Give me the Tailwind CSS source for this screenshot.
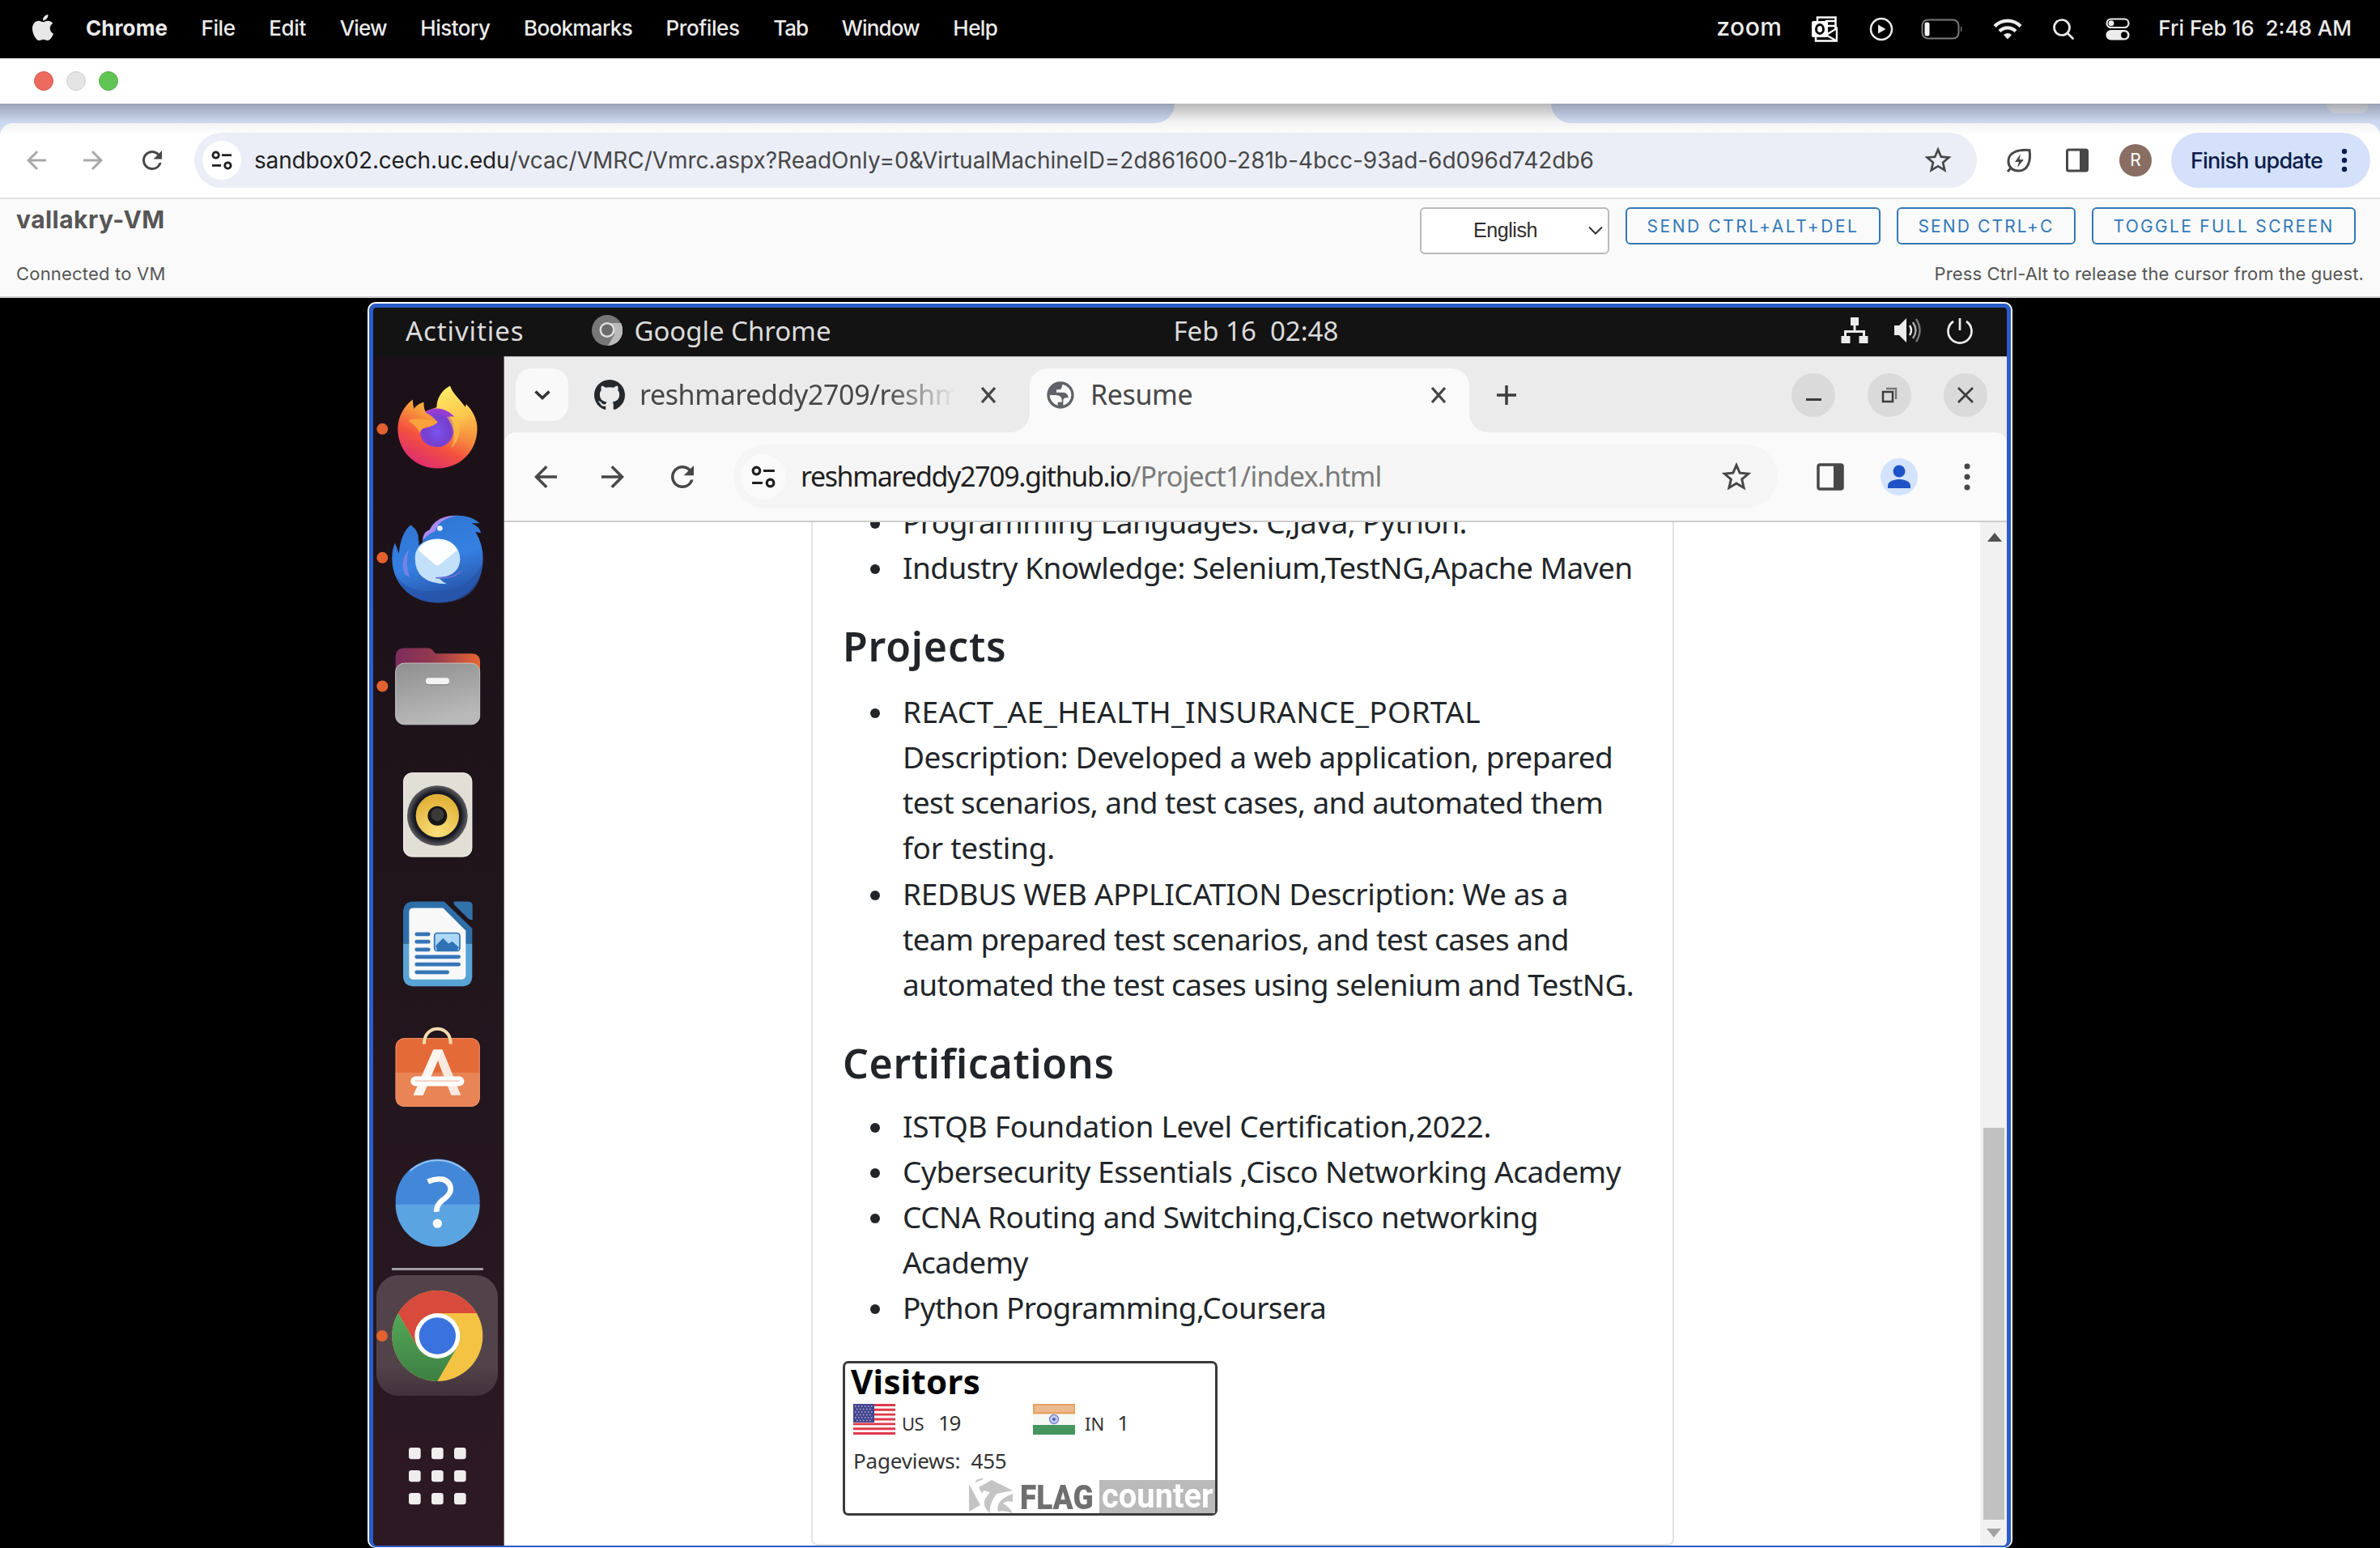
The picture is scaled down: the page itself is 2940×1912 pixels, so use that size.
<!DOCTYPE html>
<html lang="en">
<head>
<meta charset="utf-8">
<title>vallakry-VM</title>
<script src="https://cdn.jsdelivr.net/npm/@tailwindcss/browser@4"></script>
</head>
<body class="w-[2940px] h-[1912px] overflow-hidden bg-black font-['Inter',sans-serif] whitespace-nowrap">

<!-- macOS menu bar -->
<header class="h-[72px] bg-black flex items-center pl-[37px] pr-[35px] text-[#ececec] text-[26px] font-medium">
  <svg class="w-[32px] h-[32px] -mt-1" viewBox="0 0 24 24" fill="#e8e8e8"><path d="M12.152 6.896c-.948 0-2.415-1.078-3.96-1.04-2.04.027-3.91 1.183-4.961 3.014-2.117 3.675-.546 9.103 1.519 12.09 1.013 1.454 2.208 3.09 3.792 3.039 1.52-.065 2.09-.987 3.935-.987 1.831 0 2.35.987 3.96.948 1.637-.026 2.676-1.48 3.676-2.948 1.156-1.688 1.636-3.325 1.662-3.415-.039-.013-3.182-1.221-3.22-4.857-.026-3.04 2.48-4.494 2.597-4.559-1.429-2.09-3.623-2.324-4.39-2.376-2-.156-3.675 1.09-4.61 1.09zM15.53 3.83c.843-1.012 1.4-2.427 1.245-3.83-1.207.052-2.662.805-3.532 1.818-.78.896-1.454 2.338-1.273 3.714 1.338.104 2.715-.688 3.559-1.701"/></svg>
  <nav class="flex items-center gap-[41.6px] ml-[37px] -mt-[3px]">
    <b class="font-bold tracking-[0.08px]">Chrome</b>
    <span class="tracking-[-0.43px]">File</span>
    <span class="tracking-[-0.29px]">Edit</span>
    <span class="tracking-[-0.85px]">View</span>
    <span class="tracking-[-0.52px]">History</span>
    <span class="tracking-[-0.65px]">Bookmarks</span>
    <span class="tracking-[-0.41px]">Profiles</span>
    <span class="tracking-[-0.97px]">Tab</span>
    <span class="tracking-[-0.86px]">Window</span>
    <span class="tracking-[-0.57px]">Help</span>
  </nav>
  <div class="flex items-center ml-auto">
    <span class="text-[30px] font-medium -mt-[5px] tracking-[0.46px]">zoom</span>
    <svg class="w-[32px] h-[32px] ml-[37px]" viewBox="0 0 32 32" fill="none" stroke="#fff" stroke-width="2.5"><path d="M7 6V1.500H29.500V17M18 5v10M29 12H18M5 26v4.500H31V15L18 23"/><path d="M19 24l11 6M18 6h11"/><rect x="0" y="6" width="20" height="20" rx="2" fill="#fff" stroke="none"/><ellipse cx="10" cy="16" rx="4.500" ry="5.500" stroke="#000" stroke-width="3"/></svg>
    <svg class="w-[30px] h-[30px] ml-[39px]" viewBox="0 0 30 30"><circle cx="15" cy="15" r="13" fill="none" stroke="#ececec" stroke-width="2.500"/><path d="M11 9.500v11l9.500-5.500z" fill="#ececec"/></svg>
    <svg class="w-[52px] h-[26px] ml-[34px]" viewBox="0 0 52 26"><rect x="1.500" y="1.500" width="45" height="23" rx="7" fill="none" stroke="#7b7b7b" stroke-width="2"/><rect x="4.500" y="4.500" width="6" height="17" rx="2.500" fill="#f4f4f4"/><path d="M49 9q3 4 0 8z" fill="#7b7b7b"/></svg>
    <svg class="w-[36px] h-[28px] ml-[37px]" viewBox="0 0 36 28" fill="none" stroke="#ececec" stroke-width="4.200"><path d="M2 10.500a22 22 0 0 1 32 0"/><path d="M8 16.500a14 14 0 0 1 20 0"/><path d="M13 21a7.500 7.500 0 0 1 10 0l-5 5.500z" fill="#ececec" stroke="none"/></svg>
    <svg class="w-[28px] h-[28px] ml-[37px]" viewBox="0 0 28 28" fill="none" stroke="#ececec" stroke-width="2.700" stroke-linecap="round"><circle cx="12" cy="12" r="9.500"/><path d="M19 19l6.500 6.500"/></svg>
    <svg class="w-[30px] h-[28px] ml-[38px]" viewBox="0 0 30 28"><rect x="1.500" y="1.500" width="27" height="10.500" rx="5.200" fill="none" stroke="#ececec" stroke-width="2.200"/><circle cx="7" cy="6.700" r="3.400" fill="#ececec"/><rect x=".5" y="15" width="29" height="12.500" rx="6.200" fill="#ececec"/><circle cx="23" cy="21.200" r="4" fill="#000"/></svg>
    <span class="ml-[35px] -mt-[3px] whitespace-pre">Fri Feb 16  2:48 AM</span>
  </div>
</header>

<!-- window controls -->
<div class="h-[56px] bg-white flex items-center gap-4 pl-[42px]">
  <i class="size-6 rounded-full bg-[#ed6a5f] border border-[#d8574c]"></i><i class="size-6 rounded-full bg-[#e4e4e4] border border-[#cfcfcf]"></i><i class="size-6 rounded-full bg-[#61c555] border border-[#52ad45]"></i>
</div>

<!-- clipped tab strip and toolbar -->
<div class="relative bg-[#d5e1fb]">
  <div class="h-6 flex justify-between bg-white">
    <div class="w-[1451px] bg-[#d5e1fb] rounded-br-[24px]"></div>
    <div class="w-[1024px] bg-[#d5e1fb] rounded-bl-[24px] flex justify-end pr-[14px]"><div class="w-[52px] h-[12px] rounded-b-[20px] bg-[#e9edf6]"></div></div>
  </div>
  <div class="h-[92px] bg-white rounded-t-[16px] flex items-center pl-[27px] pr-3 text-[28px]">
    <svg class="size-9" viewBox="0 0 24 24" fill="#a9a9a9"><path d="M20 11H7.830l5.590-5.590L12 4l-8 8 8 8 1.410-1.410L7.830 13H20v-2z"/></svg>
    <svg class="size-9 ml-[34px] rotate-180" viewBox="0 0 24 24" fill="#a9a9a9"><path d="M20 11H7.830l5.590-5.590L12 4l-8 8 8 8 1.410-1.410L7.830 13H20v-2z"/></svg>
    <svg class="size-9 ml-[37px]" viewBox="0 0 24 24" fill="#474747"><path d="M17.650 6.350A7.958 7.958 0 0 0 12 4c-4.420 0-7.990 3.580-8 8s3.570 8 8 8c3.730 0 6.840-2.550 7.730-6h-2.080A5.990 5.990 0 0 1 12 18c-3.310 0-6-2.690-6-6s2.690-6 6-6c1.660 0 3.140.690 4.220 1.780L13 11h7V4l-2.350 2.350z"/></svg>
    <div class="w-[2202px] h-[68px] ml-[34px] rounded-full bg-[#ebeef7] flex items-center pl-[10px] pr-[28px]">
      <div class="size-12 rounded-full bg-white flex items-center justify-center"><svg class="w-[26px] h-[24px]" viewBox="0 0 28 26" fill="none" stroke="#1f1f1f" stroke-width="3"><circle cx="6" cy="6" r="4"/><path d="M14 6h13M1 20h12"/><circle cx="22" cy="20" r="4"/></svg></div>
      <span class="ml-[16px] text-[#1f1f1f] tracking-[-0.18px]">sandbox02.cech.uc.edu</span><span class="text-[#474747] tracking-[-0.02px]">/vcac/VMRC/Vmrc.aspx?ReadOnly=0&amp;VirtualMachineID=2d861600-281b-4bcc-93ad-6d096d742db6</span>
      <svg class="size-10 ml-auto" viewBox="0 0 24 24" fill="#474747"><path d="M22 9.240l-7.190-.620L12 2 9.190 8.630 2 9.240l5.460 4.730L5.820 21 12 17.270 18.180 21l-1.630-7.030L22 9.240zM12 15.400l-3.760 2.270 1-4.280-3.320-2.880 4.380-.380L12 6.100l1.710 4.040 4.380.380-3.320 2.880 1 4.280L12 15.400z"/></svg>
    </div>
    <svg class="size-9 ml-[34px]" viewBox="0 0 36 36" fill="none" stroke="#474747" stroke-width="3"><path d="M31 5.500C33 19 29 31 17.500 31C9 31 4.500 25 5 18C5.500 9 15 4.500 31 5.500zM4 32l4.500-5"/><path d="M20 10l-7 10h5l-2 7 8-10h-5.500z" fill="#474747" stroke="none"/></svg>
    <svg class="size-9 ml-[36px]" viewBox="0 0 36 36"><rect x="5.500" y="5" width="25" height="26" rx="2" fill="none" stroke="#474747" stroke-width="3"/><path d="M21 5h9.500v26H21z" fill="#474747"/></svg>
    <div class="size-10 ml-[34px] rounded-full bg-[#8a6e63] text-white text-[21px] flex items-center justify-center">R</div>
    <div class="w-[246px] h-[68px] ml-6 rounded-full bg-[#d5e1fb] flex items-center pl-[24px] pr-[28px] text-[#0c1d4a] font-medium text-[27px]"><span class="pt-[2px] tracking-[-0.81px]">Finish update</span><svg class="w-2 h-[30px] ml-auto" viewBox="0 0 8 30" fill="#0c1d4a"><circle cx="4" cy="4" r="3.200"/><circle cx="4" cy="15" r="3.200"/><circle cx="4" cy="26" r="3.200"/></svg></div>
  </div>
  <div class="absolute inset-x-0 top-0 h-10 bg-linear-to-b from-black/28 via-black/5 via-55% to-transparent"></div>
</div>

<!-- console header -->
<div class="h-[124px] border-y-2 border-t-[#e1e1e1] border-b-[#cccccc] bg-[#fafafa] flex justify-between pl-5 text-[#565656]">
  <div class="flex flex-col pt-[5px]">
    <h1 class="text-[30px] leading-[40px] font-bold tracking-[0.45px]">vallakry-VM</h1>
    <p class="text-[22px] leading-[30px] mt-[32px] tracking-[0.2px]">Connected to VM</p>
  </div>
  <div class="flex flex-col items-end pt-[10px] pr-[20px]">
    <div class="flex gap-5 pr-[10px] text-[#3278b8] text-[21px]">
      <div class="w-[234px] h-[58px] rounded-[6px] border-2 border-[#bababa] bg-white text-[#2d2d2d] flex items-center pl-[64px] pr-[6px] font-['Liberation_Sans',sans-serif] text-[25px]"><span class="tracking-[-0.43px]">English</span><svg class="w-[18px] h-[12px] ml-auto" viewBox="0 0 18 12" fill="none" stroke="#333" stroke-width="2"><path d="M1 1.500l8 8 8-8"/></svg></div>
      <div class="w-[315px] h-[46px] rounded-[6px] border-2 border-[#3278b8] flex items-center justify-center pt-px"><span class="tracking-[2.56px]">SEND CTRL+ALT+DEL</span></div>
      <div class="w-[221px] h-[46px] rounded-[6px] border-2 border-[#3278b8] flex items-center justify-center pt-px"><span class="tracking-[2.12px]">SEND CTRL+C</span></div>
      <div class="w-[326px] h-[46px] rounded-[6px] border-2 border-[#3278b8] flex items-center justify-center pt-px"><span class="tracking-[2.29px]">TOGGLE FULL SCREEN</span></div>
    </div>
    <p class="text-[22px] leading-[30px] mt-[9px] tracking-[0.12px]">Press Ctrl-Alt to release the cursor from the guest.</p>
  </div>
</div>

<!-- remote desktop -->
<main class="h-[1544px] bg-black pt-[5px] pl-[454px]">
<div class="w-[2032px] h-[1539px] rounded-[10px] border-2 border-b border-white bg-[#2a5dc8]">
<div class="h-[1536px] rounded-[9px] border-[5px] border-b-2 border-[#2a5dc8] overflow-hidden flex flex-col bg-[#131313] font-['Noto_Sans',sans-serif]">
  <div class="h-[60px] shrink-0 flex items-center pl-[40px] pr-[40px] text-[33px] text-[#dcdcdc]">
    <span class="-mt-[2px] tracking-[0.9px]">Activities</span>
    <svg class="size-[38px] ml-[84px] -mt-1" viewBox="0 0 38 38"><circle cx="19" cy="19" r="19" fill="#777"/><path d="M19 10h17A19 19 0 0 1 20 38l8-14z" fill="#b9b9b9"/><circle cx="19" cy="18.500" r="9.500" fill="#ddd"/><circle cx="19" cy="18.500" r="7" fill="#6b6b6b"/></svg>
    <span class="ml-[14px] -mt-[2px] tracking-[-0.05px]">Google Chrome</span>
    <span class="ml-[423px] -mt-[3px] whitespace-pre">Feb 16  02:48</span>
    <div class="ml-auto flex items-center gap-[27px] -mt-1">
      <svg class="size-9" viewBox="0 0 36 36" fill="#ececec"><path d="M13 2h10v10h-3.500v6H31v7h3.500v9h-11v-9H28v-4H8v4h4.500v9h-11v-9H5v-7h11.500v-6H13z"/></svg>
      <svg class="size-10" viewBox="0 0 40 40" fill="none" stroke="#ececec" stroke-width="2.500"><path d="M4 14h6l9-9v30l-9-9H4z" fill="#ececec" stroke="none"/><path d="M23 14q4 6 0 12"/><path d="M27 10q7 10 0 20" stroke="#aaa"/><path d="M31 6q9 14 0 28" stroke="#777"/></svg>
      <svg class="size-9" viewBox="0 0 36 36" fill="none" stroke="#ececec" stroke-width="2.700"><path d="M10 7a14.500 14.500 0 1 0 16 0M18 3v15"/></svg>
    </div>
  </div>
  <div class="flex flex-1 min-h-0">

    <!-- dock -->
    <aside class="w-[162px] border-r border-[#6f666c] bg-linear-to-b from-[#1c1018] via-[#21151c] via-50% to-[#2d1924] pt-[10px] flex flex-col">
      <svg class="w-[161px] h-[159px] shrink-0" viewBox="33 1.500 483 477">
        <defs>
          <linearGradient id="ff" x1=".8" y1="0" x2=".3" y2="1"><stop offset="0" stop-color="#ffe94f"/><stop offset=".4" stop-color="#f8a93b"/><stop offset=".7" stop-color="#f4513f"/><stop offset="1" stop-color="#dd2a72"/></linearGradient>
          <radialGradient id="fp" cx=".5" cy=".6" r=".6"><stop offset="0" stop-color="#7c53ee"/><stop offset=".6" stop-color="#7440cf"/><stop offset="1" stop-color="#a33bd6"/></radialGradient>
          <linearGradient id="fy" x1="0" y1="0" x2=".2" y2="1"><stop offset="0" stop-color="#fff168"/><stop offset=".55" stop-color="#fbc44c"/><stop offset="1" stop-color="#f4663f" stop-opacity="0"/></linearGradient>
        </defs>
        <circle cx="67" cy="241" r="21" fill="#e2622f"/>
        <path d="M124 240C124 195 148 155 180 132Q179 150 184 166Q200 146 221 142Q219 160 226 176L270 160C270 125 290 95 318 82C326 110 352 128 374 160L378 150Q408 180 416 218C430 300 372 387 272 387C186 387 124 322 124 240z" fill="url(#ff)"/>
        <path d="M268 165C268 125 290 95 318 82C326 110 352 128 374 162L378 150Q410 182 418 225C424 290 380 330 345 345C300 350 330 300 335 250z" fill="url(#fy)"/>
        <path d="M226 180C250 158 300 158 334 196L316 194C345 230 335 306 270 308C225 306 200 275 208 240Q240 240 272 216Q250 190 226 180z" fill="url(#fp)"/>
        <path d="M166 208Q190 200 226 206Q255 206 272 214Q262 232 232 232Q210 240 206 256Q190 225 166 214z" fill="#f9a23c"/>
        <path d="M306 196Q350 200 355 235Q352 290 320 312Q350 260 306 196z" fill="#fbbd46" opacity=".7"/>
      </svg>
      <svg class="w-[161px] h-[159px] shrink-0" viewBox="33 478.500 483 477">
        <defs><linearGradient id="tb" x1="0" y1="0" x2=".3" y2="1"><stop offset="0" stop-color="#2f74cf"/><stop offset=".6" stop-color="#3580e2"/><stop offset="1" stop-color="#2857ac"/></linearGradient></defs>
        <circle cx="67" cy="718" r="21" fill="#e2622f"/>
        <path d="M103 720Q102 690 114 664L128 702Q136 625 172 597Q208 620 202 672L216 660Q226 640 240 625Q262 565 345 562Q395 562 428 590L398 590Q430 605 432 626L412 622Q440 670 440 720C440 820 370 885 272 885C175 885 103 815 103 720z" fill="url(#tb)"/>
        <path d="M202 672L216 660Q224 640 236 622L196 640z" fill="#1c1018" opacity=".35"/>
        <path d="M216 660Q214 625 242 614Q270 560 345 562Q275 575 262 620Q225 635 216 660z" fill="#a78af0"/>
        <path d="M150 780Q130 730 165 688Q150 740 168 790z" fill="#8f86ea" opacity=".7"/>
        <path d="M115 780Q150 840 240 842Q380 850 438 740Q430 885 272 885Q160 885 115 780z" fill="#2754a8" opacity=".6"/>
        <path d="M188 720C188 675 225 649 272 649C320 649 356 680 355 725C352 770 318 790 275 790Q285 806 306 815Q188 815 188 720z" fill="#c3e0fb"/>
        <path d="M200 690Q220 649 272 649Q325 649 344 690L282 742Q271 750 260 742z" fill="#fdfeff"/>
        <path d="M265 790Q330 795 362 762Q345 800 265 795z" fill="#6f6fd8"/>
        <circle cx="280" cy="609" r="10" fill="#e9f4ff"/>
      </svg>
      <svg class="w-[161px] h-[159px] shrink-0" viewBox="33 955.500 483 477">
        <defs><linearGradient id="fo"><stop offset="0" stop-color="#7d2d5c"/><stop offset=".45" stop-color="#93394f"/><stop offset="1" stop-color="#ea6632"/></linearGradient><linearGradient id="fg" x1="0" y1="0" x2=".3" y2="1"><stop offset="0" stop-color="#8f8f8f"/><stop offset="1" stop-color="#b9b9b9"/></linearGradient></defs>
        <circle cx="67" cy="1194" r="21" fill="#e2622f"/>
        <path d="M116 1160V1082Q118 1054 146 1053H236Q248 1053 256 1064L264 1073H400Q428 1075 429 1102V1160z" fill="url(#fo)"/>
        <rect x="116" y="1109" width="312" height="227" rx="32" fill="url(#fg)" stroke="#c6c6c6" stroke-width="3"/>
        <rect x="228" y="1166" width="87" height="24" rx="11" fill="#7a7a7a"/><rect x="228" y="1163" width="87" height="24" rx="11" fill="#f4f4f4"/>
      </svg>
      <svg class="w-[161px] h-[159px] shrink-0" viewBox="33 -7.500 483 477">
        <defs><radialGradient id="rb" cx=".5" cy=".9" r=".8"><stop offset="0" stop-color="#f9e07c"/><stop offset="1" stop-color="#e2b33a"/></radialGradient><radialGradient id="rr"><stop offset=".78" stop-color="#191923"/><stop offset="1" stop-color="#5e5f62"/></radialGradient></defs>
        <rect x="144" y="74" width="256" height="313" rx="34" fill="#e2dfd6"/><rect x="146" y="76" width="252" height="309" rx="32" fill="none" stroke="#efede6" stroke-width="3"/>
        <circle cx="271" cy="234" r="112" fill="url(#rr)"/><circle cx="271" cy="234" r="80" fill="url(#rb)"/><circle cx="271" cy="235" r="36" fill="#161616"/><circle cx="271" cy="230" r="24" fill="#3a3a3a"/>
      </svg>
      <svg class="w-[161px] h-[159px] shrink-0" viewBox="33 469.500 483 477">
        <path d="M144 708V590Q146 554 180 552H296L400 652V708z" fill="#2d6fa9"/><path d="M144 708H400V832Q398 864 368 866H178Q146 864 144 832z" fill="#59a4d4"/>
        <path d="M332 552H386Q400 553 401 566V620Q390 620 384 614L336 566Q330 558 332 552z" fill="#3272ab"/>
        <path d="M180 576H292L376 660V826Q375 840 362 841H180Q167 840 166 826V590Q167 577 180 576z" fill="#f8f8f9"/>
        <path d="M194 673h44M194 701h44M194 730h44M194 757h156M194 785h156M194 814h114" stroke="#3576b8" stroke-width="14" stroke-linecap="round"/>
        <rect x="260" y="669" width="94" height="66" rx="10" fill="#acd8f5" stroke="#2c6fb3" stroke-width="5"/><path d="M264 716l28-28 20 20 14-8 25 22-8 12h-72z" fill="#2f73b6"/>
      </svg>
      <svg class="w-[161px] h-[159px] shrink-0" viewBox="33 946.500 483 477">
        <rect x="116" y="1058" width="312" height="254" rx="32" fill="#e46a37"/><path d="M116 1186H428V1280Q426 1310 396 1312H148Q118 1310 116 1280z" fill="#e88455"/><rect x="117.500" y="1059.500" width="309" height="251" rx="31" fill="none" stroke="#f0936a" stroke-width="3"/>
        <path d="M222 1080C220 1005 322 1005 320 1080" fill="none" stroke="#f2dcae" stroke-width="12"/>
        <path d="M256 1101H290L358 1270H322L271 1138L218 1270H182z" fill="#fbe9e0"/><path d="M256 1101H290L218 1270H182z" fill="#fff5ef"/>
        <rect x="172" y="1200" width="198" height="36" rx="18" fill="#fff"/><path d="M190 1217h164" stroke="#f6cdbb" stroke-width="5"/>
      </svg>
      <svg class="w-[161px] h-[159px] shrink-0" viewBox="33 13.500 483 477">
        <circle cx="272" cy="252" r="156" fill="#4388d8"/><path d="M116 265H428A156 156 0 0 1 116 265z" fill="#5ba4e2"/><path d="M170 140A152 152 0 0 1 374 140" fill="none" stroke="#9cc6ee" stroke-width="5"/>
        <path d="M236 180Q266 166 294 172Q326 186 318 218Q312 234 288 250Q266 268 268 292" fill="none" stroke="#fff" stroke-width="20"/><circle cx="271" cy="335" r="17" fill="#fff"/>
      </svg>
      <div class="w-[113px] h-[3px] ml-[23px] mt-[3px] bg-[#a39da1] shrink-0"></div>
      <div class="w-[150px] h-[149px] ml-[4px] mt-[6px] rounded-[27px] bg-linear-to-b from-[#52434b] from-75% to-[#41313a] shrink-0">
        <svg class="w-[150px] h-[149px]" viewBox="46 525 450 447">
          <defs><linearGradient id="cg" x1="0" y1="0" x2="0" y2="1"><stop offset="0" stop-color="#54a85a"/><stop offset="1" stop-color="#3d7f42"/></linearGradient></defs>
          <circle cx="67" cy="750" r="21" fill="#e2622f"/>
          <circle cx="272" cy="750" r="168" fill="#f4c344"/>
          <path d="M126.500 666A168 168 0 0 1 417.500 666H272L199 792z" fill="#d84a3b"/>
          <path d="M126.500 666A168 168 0 0 0 272 918L345 792L199 792z" fill="url(#cg)"/>
          <circle cx="272" cy="750" r="84" fill="#fff"/><circle cx="272" cy="750" r="68" fill="#3a73e0"/>
        </svg>
      </div>
      <svg class="w-[161px] h-[150px] shrink-0 mt-[24px]" viewBox="33 1044 483 450" fill="#efeeed"><g><rect x="165" y="1164" width="44" height="43" rx="10"/><rect x="249" y="1164" width="44" height="43" rx="10"/><rect x="333" y="1164" width="44" height="43" rx="10"/><rect x="165" y="1248" width="44" height="43" rx="10"/><rect x="249" y="1248" width="44" height="43" rx="10"/><rect x="333" y="1248" width="44" height="43" rx="10"/><rect x="165" y="1332" width="44" height="43" rx="10"/><rect x="249" y="1332" width="44" height="43" rx="10"/><rect x="333" y="1332" width="44" height="43" rx="10"/></g></svg>
    </aside>

    <!-- guest browser -->
    <section class="flex-1 min-w-0 flex flex-col bg-white text-[#474747]">
      <div class="h-[94px] shrink-0 bg-[#ebebeb] border-t border-[#b9b9b9] flex pt-[14px] pl-[14px] pr-[24px] text-[34px]">
        <div class="size-[65px] rounded-[20px] bg-[#f9f9f9] flex items-center justify-center"><svg class="w-5 h-3" viewBox="0 0 20 12" fill="none" stroke="#333" stroke-width="3.500"><path d="M1.500 1.500l8.500 8 8.500-8"/></svg></div>
        <div class="h-[65px] flex items-center pl-[32px] w-[571px]">
          <svg class="w-[38px] h-[38px]" viewBox="0 0 16 16" fill="#24292e"><path d="M8 0C3.580 0 0 3.580 0 8c0 3.540 2.290 6.530 5.470 7.590.400.070.550-.170.550-.380 0-.190-.010-.820-.010-1.490-2.010.370-2.530-.490-2.690-.940-.090-.230-.480-.940-.820-1.130-.280-.150-.680-.520-.010-.530.630-.010 1.080.580 1.230.820.720 1.210 1.870.870 2.330.660.070-.520.280-.870.510-1.070-1.780-.200-3.640-.890-3.640-3.950 0-.870.310-1.590.820-2.150-.080-.200-.360-1.020.080-2.120 0 0 .670-.210 2.200.820.640-.180 1.320-.270 2-.270s1.360.090 2 .270c1.530-1.040 2.200-.820 2.200-.820.440 1.100.160 1.920.080 2.120.510.560.820 1.270.820 2.150 0 3.070-1.870 3.750-3.650 3.950.290.250.540.730.540 1.480 0 1.070-.010 1.930-.010 2.200 0 .210.150.460.550.380A8.010 8.010 0 0 0 16 8c0-4.420-3.580-8-8-8z"/></svg>
          <div class="w-[390px] ml-[18px] overflow-hidden mask-r-from-78% mask-r-to-100%"><span class="tracking-[-0.4px]">reshmareddy2709/reshm</span></div>
          <svg class="size-5 ml-[31px]" viewBox="0 0 20 20" stroke="#474747" stroke-width="3.300"><path d="M2 1l16 18M18 1L2 19"/></svg>
        </div>
        <div class="relative w-[543px] h-[79px] -ml-[1px] rounded-t-[22px] bg-[#fafafa] flex items-center pl-[18px] pr-[28px] pb-[14px]">
          <svg class="absolute -left-[24px] bottom-0 size-6" viewBox="0 0 24 24" fill="#fafafa"><path d="M24 0v24H0A24 24 0 0 0 24 0z"/></svg><svg class="absolute -right-[24px] bottom-0 size-6" viewBox="0 0 24 24" fill="#fafafa"><path d="M0 0v24h24A24 24 0 0 1 0 0z"/></svg>
          <svg class="size-[40px]" viewBox="0 0 24 24" fill="#5f6368"><path d="M12 2C6.480 2 2 6.480 2 12s4.480 10 10 10 10-4.480 10-10S17.520 2 12 2zM4 12h4.400c3.400 0 4.900 1.700 4.600 5.200H10v2.500A8 8 0 0 1 4 12zm10 7.700V15.900c0-1 1-2 2-2h2c-.5-2-1.500-3.900-4-3.900H9V8h2c1 0 2-1 2-2s.5-1.800 1-1.800A8 8 0 0 1 14 19.700z"/></svg>
          <span class="ml-[17px] tracking-[-0.4px]">Resume</span>
          <svg class="size-5 ml-auto" viewBox="0 0 20 20" stroke="#474747" stroke-width="3.300"><path d="M2 1l16 18M18 1L2 19"/></svg>
        </div>
        <div class="h-[65px] flex flex-1 items-center pl-[34px]">
          <svg class="size-6" viewBox="0 0 24 24" stroke="#3c3c3c" stroke-width="3.500"><path d="M12 0v24M0 12h24"/></svg>
          <div class="flex gap-10 ml-auto">
            <div class="size-[54px] rounded-full bg-[#dadada] flex items-center justify-center"><i class="w-[19px] h-[3px] mt-[11px] bg-[#3c3c3c]"></i></div>
            <div class="size-[54px] rounded-full bg-[#dadada] flex items-center justify-center"><svg class="size-5" viewBox="0 0 20 20" fill="none" stroke="#3c3c3c" stroke-width="2.500"><rect x="2" y="6" width="12" height="12"/><path d="M6 2h12v13" stroke="#777"/></svg></div>
            <div class="size-[54px] rounded-full bg-[#dadada] flex items-center justify-center"><svg class="size-5" viewBox="0 0 20 20" stroke="#3c3c3c" stroke-width="2.700"><path d="M1 1l18 18M19 1L1 19"/></svg></div>
          </div>
        </div>
      </div>
      <div class="h-[111px] shrink-0 bg-[#ebebeb]"><div class="h-full bg-[#fafafa] border-b-2 border-[#cdcdcd] rounded-t-[14px] flex items-center pl-[30px] pr-[44px] text-[34px]">
        <svg class="size-[42px]" viewBox="0 0 24 24" fill="#474747"><path d="M20 11H7.830l5.590-5.590L12 4l-8 8 8 8 1.410-1.410L7.830 13H20v-2z"/></svg>
        <svg class="size-[42px] ml-[41px] rotate-180" viewBox="0 0 24 24" fill="#474747"><path d="M20 11H7.830l5.590-5.590L12 4l-8 8 8 8 1.410-1.410L7.830 13H20v-2z"/></svg>
        <svg class="size-[42px] ml-[44px]" viewBox="0 0 24 24" fill="#474747"><path d="M17.650 6.350A7.958 7.958 0 0 0 12 4c-4.420 0-7.990 3.580-8 8s3.570 8 8 8c3.730 0 6.840-2.550 7.730-6h-2.080A5.990 5.990 0 0 1 12 18c-3.310 0-6-2.690-6-6s2.690-6 6-6c1.660 0 3.140.690 4.220 1.780L13 11h7V4l-2.350 2.350z"/></svg>
        <div class="w-[1290px] h-[79px] ml-[42px] rounded-full bg-[#f5f5f5] flex items-center pl-[9px] pr-[29px]">
          <div class="size-14 rounded-full bg-[#fafafa] flex items-center justify-center"><svg class="w-[30px] h-[28px]" viewBox="0 0 28 26" fill="none" stroke="#1f1f1f" stroke-width="3"><circle cx="6" cy="6" r="4"/><path d="M14 6h13M1 20h12"/><circle cx="22" cy="20" r="4"/></svg></div>
          <span class="ml-[18px] text-[#1f1f1f] tracking-[-1.4px]">reshmareddy2709.github.io</span><span class="text-[#7a7a7a] tracking-[-0.8px]">/Project1/index.html</span>
          <svg class="size-11 ml-auto" viewBox="0 0 24 24" fill="#474747"><path d="M22 9.240l-7.190-.620L12 2 9.190 8.630 2 9.240l5.460 4.730L5.820 21 12 17.270 18.180 21l-1.630-7.030L22 9.240zM12 15.400l-3.760 2.270 1-4.280-3.320-2.880 4.380-.380L12 6.100l1.710 4.040 4.380.380-3.320 2.880 1 4.280L12 15.400z"/></svg>
        </div>
        <svg class="size-[34px] ml-[48px]" viewBox="0 0 34 34"><rect x="2" y="2" width="30" height="30" rx="2" fill="none" stroke="#474747" stroke-width="3.500"/><path d="M21 1h11v32H21z" fill="#474747"/></svg>
        <svg class="size-[46px] ml-[45px]" viewBox="0 0 46 46"><circle cx="23" cy="23" r="23" fill="#d3e3fd"/><circle cx="23" cy="16" r="7.500" fill="#1f52c6"/><path d="M9 37v-3c0-6 9-8 14-8s14 2 14 8v3z" fill="#1f52c6"/></svg>
        <svg class="w-[10px] h-[34px] ml-[56px]" viewBox="0 0 10 34" fill="#474747"><circle cx="5" cy="4" r="3.500"/><circle cx="5" cy="17" r="3.500"/><circle cx="5" cy="30" r="3.500"/></svg>
      </div></div>

      <!-- page -->
      <div class="flex-1 min-h-0 flex overflow-hidden">
        <article class="w-[1066px] h-[1264px] ml-[379px] border-2 border-t-0 border-[#e3e3e3] rounded-b-[8px] pl-[37px] text-[37px] leading-[56.1px] text-[#212529] overflow-hidden">
          <ul class="-mt-[28px] pl-[74px]">
            <li class="relative before:absolute before:-left-[40px] before:top-[24px] before:size-[12px] before:rounded-full before:bg-[#212529]"><span class="tracking-[-0.54px]">Programming Languages: C,Java, Python.</span></li>
            <li class="relative before:absolute before:-left-[40px] before:top-[24px] before:size-[12px] before:rounded-full before:bg-[#212529]"><span class="tracking-[-0.54px]">Industry Knowledge: Selenium,TestNG,Apache Maven</span></li>
          </ul>
          <h3 class="h-[122px] pt-[17px] leading-[104px] text-[50px] font-semibold"><span class="tracking-[0.85px]">Projects</span></h3>
          <ul class="pl-[74px]">
            <li class="relative flex flex-col items-start before:absolute before:-left-[40px] before:top-[24px] before:size-[12px] before:rounded-full before:bg-[#212529]"><span class="tracking-[0.42px]">REACT_AE_HEALTH_INSURANCE_PORTAL</span><span class="tracking-[-0.4px]">Description: Developed a web application, prepared</span><span class="tracking-[-0.57px]">test scenarios, and test cases, and automated them</span><span class="tracking-[-0.2px]">for testing.</span></li>
            <li class="relative flex flex-col items-start before:absolute before:-left-[40px] before:top-[24px] before:size-[12px] before:rounded-full before:bg-[#212529]"><span class="tracking-[-0.33px]">REDBUS WEB APPLICATION Description: We as a</span><span class="tracking-[-0.56px]">team prepared test scenarios, and test cases and</span><span class="tracking-[-0.57px]">automated the test cases using selenium and TestNG.</span></li>
          </ul>
          <h3 class="h-[119px] pt-[20px] leading-[98px] text-[50px] font-semibold"><span class="tracking-[0.68px]">Certifications</span></h3>
          <ul class="pl-[74px]">
            <li class="relative before:absolute before:-left-[40px] before:top-[24px] before:size-[12px] before:rounded-full before:bg-[#212529]"><span class="tracking-[-0.26px]">ISTQB Foundation Level Certification,2022.</span></li>
            <li class="relative before:absolute before:-left-[40px] before:top-[24px] before:size-[12px] before:rounded-full before:bg-[#212529]"><span class="tracking-[-0.43px]">Cybersecurity Essentials ,Cisco Networking Academy</span></li>
            <li class="relative flex flex-col items-start before:absolute before:-left-[40px] before:top-[24px] before:size-[12px] before:rounded-full before:bg-[#212529]"><span class="tracking-[-0.47px]">CCNA Routing and Switching,Cisco networking</span><span class="tracking-[-0.65px]">Academy</span></li>
            <li class="relative before:absolute before:-left-[40px] before:top-[24px] before:size-[12px] before:rounded-full before:bg-[#212529]"><span class="tracking-[-0.62px]">Python Programming,Coursera</span></li>
          </ul>
          <div class="relative w-[463px] h-[191px] mt-[38px] rounded-[7px] border-3 border-[#3a3a3a] text-[#333] text-[26px] leading-[40px] pl-[7px]">
            <div class="h-[50px] leading-[44px] text-[42px] font-bold text-black tracking-[0.27px]">Visitors</div>
            <div class="flex items-start pl-[3px]">
              <svg class="w-[52px] h-[38px]" viewBox="0 0 52 38"><path fill="#fff" d="M0 0h52v38H0z"/><path stroke="#e0394a" stroke-width="2.920" d="M0 1.460h52M0 7.300h52M0 13.150h52M0 19h52M0 24.850h52M0 30.700h52M0 36.540h52"/><path fill="#43458f" d="M0 0h26v23H0z"/><path stroke="#b9bbdc" stroke-width="1.300" stroke-dasharray="1.500 2.500" d="M2 3h22M4 6.500h20M2 10h22M4 13.500h20M2 17h22M4 20.500h20"/></svg>
              <span class="text-[22px] ml-[8px] mt-[4px] tracking-[-0.59px]">US</span><span class="ml-[18px] mt-[3px] tracking-[-1.38px]">19</span>
              <svg class="w-[52px] h-[38px] ml-[90px]" viewBox="0 0 52 38"><path fill="#f6f8f6" d="M0 0h52v38H0z"/><path fill="#e9a260" d="M0 0h52v12.500H0z"/><path fill="#ecba90" d="M2 2h48v8H2z"/><path fill="#45955f" d="M0 26h52v12H0z"/><circle cx="26" cy="19" r="5.500" fill="#c3caee" stroke="#7d8ad0" stroke-width="1.500"/><circle cx="26" cy="19" r="2" fill="#5563b8"/></svg>
              <span class="text-[22px] ml-[12px] mt-[4px]">IN</span><span class="ml-[16px] mt-[3px]">1</span>
            </div>
            <div class="pl-[3px] mt-[6px] tracking-[-0.2px] whitespace-pre">Pageviews:  455</div>
            <div class="absolute right-0 bottom-0 h-[42px] w-[304px] flex items-end">
              <svg class="w-[56px] h-[44px]" viewBox="0 0 56 44" fill="#c4c4c4"><path d="M0 8L14 34L0 42zM8 4Q16-1 18 2Q12 4 8 6zM12 12L28 3L54 16L34 20Q24 34 26 44Q16 36 20 26L26 18L18 16L16 20zM54 20V30Q46 28 42 32Q50 36 54 44Q44 40 36 42Q32 28 54 20z"/></svg>
              <div class="w-[105px] h-[42px] pl-[7px]"><b class="inline-block origin-left scale-x-[0.88] font-['Roboto',sans-serif] font-black text-[42px] leading-[46px] text-[#6f6f6f]">FLAG</b></div>
              <div class="w-[143px] h-[41px] bg-[#bababa] pl-[3px]"><b class="inline-block origin-left scale-x-[0.95] font-['Roboto',sans-serif] font-bold text-[42px] leading-[40px] text-white">counter</b></div>
            </div>
          </div>
        </article>
        <div class="w-[33px] ml-auto bg-[#f1f1f1] flex flex-col items-center pt-[13px]">
          <svg class="w-[18px] h-[11px] ml-[2px]" viewBox="0 0 18 11" fill="#505050"><path d="M9 0l9 11H0z"/></svg>
          <div class="w-[26px] h-[484px] mt-[724px] bg-[#c1c1c1] shrink-0"></div>
          <svg class="w-[18px] h-[11px] mt-[11px]" viewBox="0 0 18 11" fill="#a3a3a3"><path d="M9 11L0 0h18z"/></svg>
        </div>
      </div>
    </section>
  </div>
</div>
</div>
</main>
</body>
</html>
